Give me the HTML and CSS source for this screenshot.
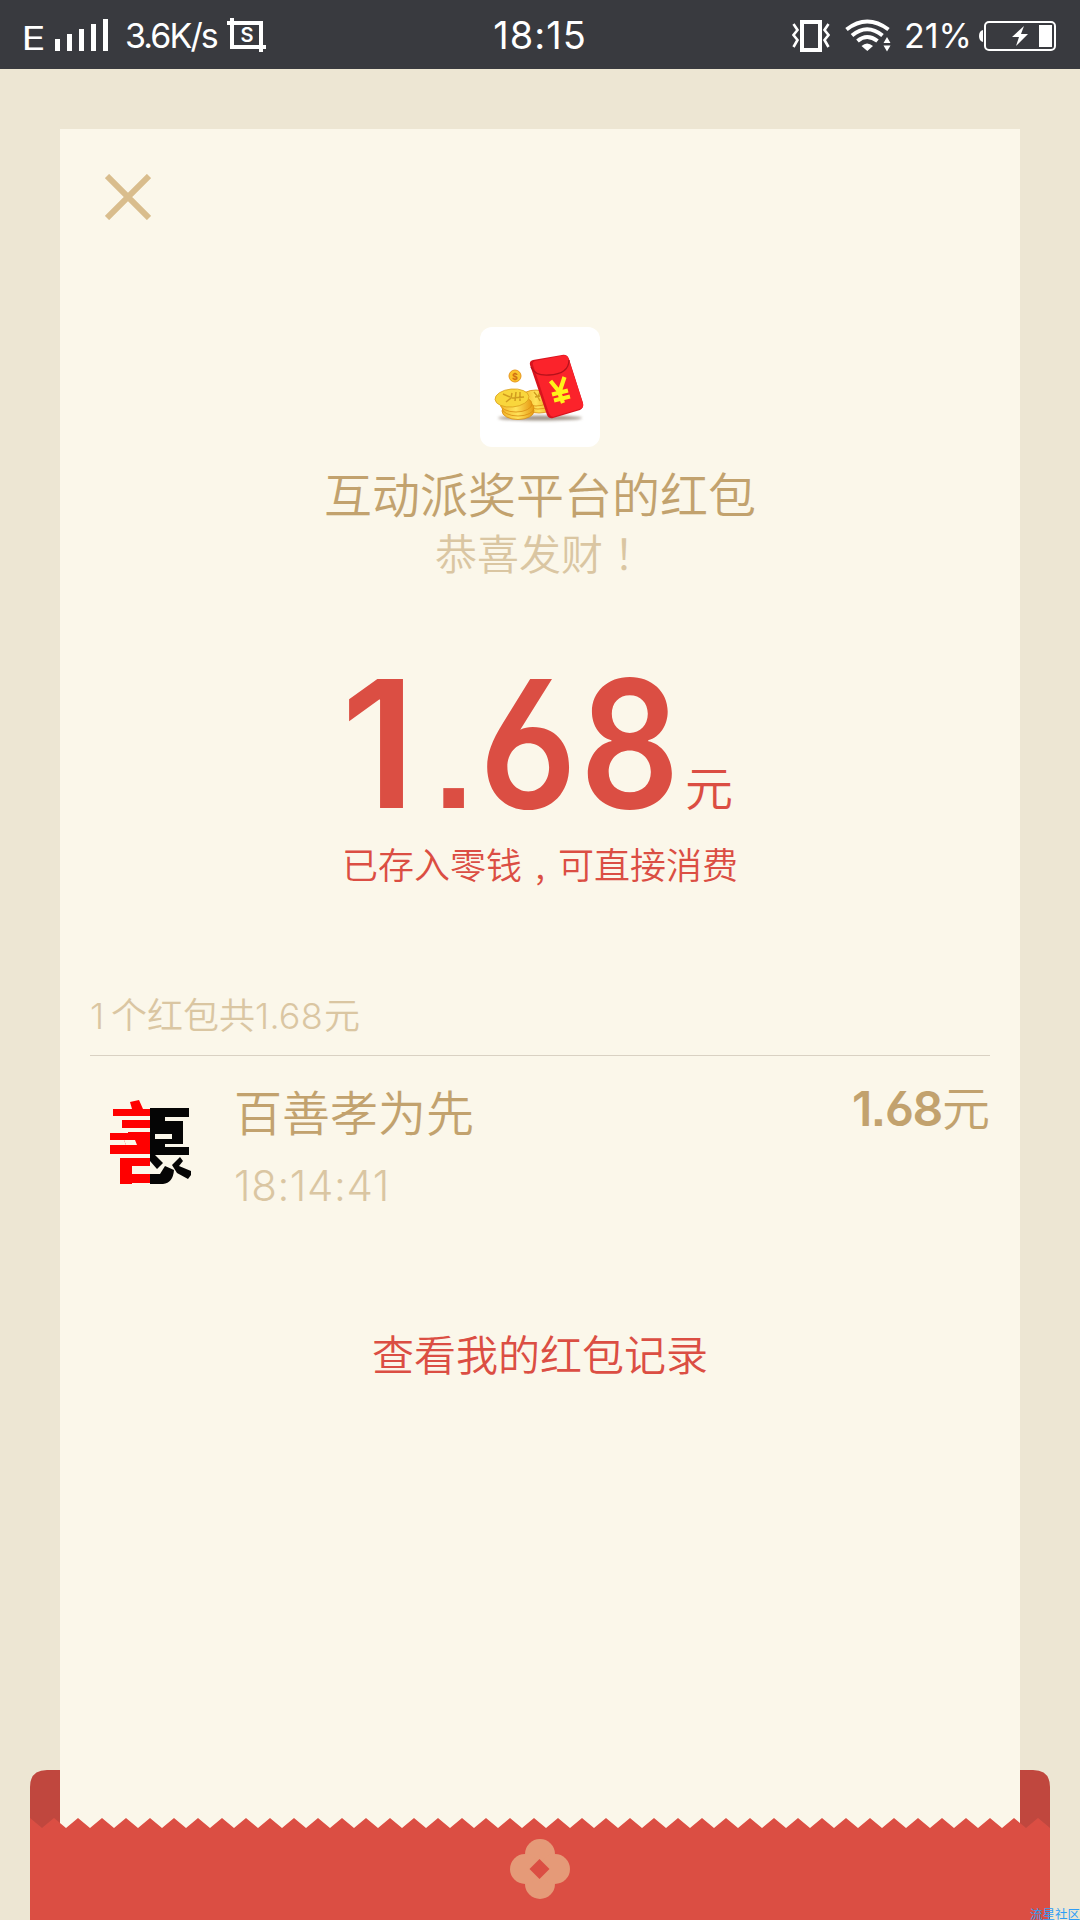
FILE: index.html
```html
<!DOCTYPE html>
<html lang="zh-CN">
<head>
<meta charset="utf-8">
<title>红包详情</title>
<link rel="stylesheet" href="styles.css">
</head>
<body>
<header class="status">
  <div class="status-left">
    <span class="network">E</span>
    <svg class="signal" width="54" height="33" viewBox="0 0 54 33" fill="#fff"><path d="M0 20h5v12H0zM12 15h5v17h-5zM24 10h5v22h-5zM36 5h5v27h-5zM48 0h5v32h-5z"/></svg>
    <span class="speed">3.6K/s</span>
    <span class="shot"><svg width="40" height="35" viewBox="0 0 40 35" fill="none" stroke="#fff" stroke-width="4"><path d="M0 5h34v29M5 0v29h34"/></svg><b class="shot-letter">S</b></span>
  </div>
  <span class="clock">18:15</span>
  <div class="status-right">
    <svg class="vibrate" width="38" height="32" viewBox="0 0 38 32" fill="none" stroke="#fff"><path d="M10 2h18v28H10z" stroke-width="4"/><path d="M1.500 4l4 6-4 5 4 5-4 7M36.500 4l-4 6 4 5-4 5 4 7" stroke-width="2.600"/></svg>
    <svg class="wifi" width="46" height="33" viewBox="0 0 46 33"><g fill="none" stroke="#fff" stroke-width="4"><path d="M1.500 10.500Q22 -5.500 43.500 10.500"/><path d="M7 16.500Q22 4 37.500 16.500"/><path d="M12.500 22Q22 14 32.500 22"/></g><path d="M16.500 27Q22 22 28 27L22.300 32zM38.500 24l3.500-6 3.500 6zM38.500 26.500h7L42 32.500z" fill="#fff"/></svg>
    <span class="percent">21%</span>
    <svg class="battery" width="77" height="30" viewBox="0 0 77 30"><rect x="6" y="1" width="70" height="28" rx="4" fill="none" stroke="#fff" stroke-width="2"/><path d="M4 9v12Q0 20 0 15T4 9zM60 4h13v22H60zM45 5L33 16h7l-3 9L49 13h-7z" fill="#fff"/></svg>
  </div>
</header>
<main class="stage">
  <section class="paper">
    <svg class="close" width="46" height="46" viewBox="0 0 46 46" stroke="#d9bd8d" stroke-width="6"><path d="M2 2l42 42M44 2L2 44"/></svg>
    <svg class="logo" width="120" height="120" viewBox="0 0 120 120">
      <defs>
        <linearGradient id="gold" x1="0" x2="1"><stop offset="0" stop-color="#f3b52b"/><stop offset=".5" stop-color="#ffe35a"/><stop offset="1" stop-color="#e79a13"/></linearGradient>
        <filter id="soft" x="-20%" y="-100%" width="140%" height="300%"><feGaussianBlur stdDeviation="1.800"/></filter>
      </defs>
      <rect width="120" height="120" rx="12" fill="#fff"/>
      <ellipse cx="60" cy="91" rx="42" ry="2.500" fill="#765" opacity=".7" filter="url(#soft)"/>
      <g fill="url(#gold)" stroke="#d98d12" stroke-width=".8">
        <ellipse cx="59" cy="79" rx="15" ry="7"/><ellipse cx="58" cy="75" rx="15" ry="7"/><ellipse cx="56" cy="71" rx="15" ry="8"/>
        <ellipse cx="38" cy="84" rx="16" ry="8.500"/><ellipse cx="38" cy="81" rx="16" ry="8"/><ellipse cx="36" cy="77" rx="16" ry="8"/>
      </g>
      <ellipse cx="32" cy="71" rx="17" ry="9" transform="rotate(-5 32 71)" fill="#f9d63c" stroke="#dba01c" stroke-width=".8"/>
      <path d="M23 67l7 3m-4 5l5-4 1-5m0 5l12-1m-8-5l-1 9m5-9v9" stroke="#d19c1f" stroke-width="1.500" fill="none"/>
      <path d="M54 65l4 5 2-5m-2 5l2 4m-5-4l5-1" stroke="#d19c1f" stroke-width="1.300" fill="none"/>
      <circle cx="35" cy="49" r="6" fill="#fbc52c" stroke="#e8961e" stroke-width="1"/>
      <text x="35" y="52.500" class="coin-sign">$</text>
      <path d="M50 38q-1-4 3-5l29-5q5-1 7 4l14 44q1 5-3 7l-27 8q-4 1-6-3z" fill="#d8141e"/>
      <path d="M53 38q-1-3 2-4l28-5.500q4-1 5.500 3l14.500 45q1 4-2 5l-27 8q-3 1-5-3z" fill="#fb232b"/>
      <path d="M51 40q4 9 18 8 20-1 20-15" fill="none" stroke="#b5121b" stroke-width="1.300"/>
      <path d="M70.500 54l9 11 5-15M79 65l4 11M72 67.500l16-4M74 73.500l16-4" fill="none" stroke="#fff21a" stroke-width="4.200"/>
    </svg>
    <h1 class="sender">互动派奖平台的红包</h1>
    <p class="wish">恭喜发财<span class="bang" lang="zh-TW">！</span></p>
    <div class="amount"><span class="d d1">1</span><span class="d dot">.</span><span class="d d6">6</span><span class="d d8">8</span><span class="yuan">元</span></div>
    <p class="saved">已存入零钱<span class="comma">,</span>可直接消费</p>
    <p class="summary"><span class="thin one">1</span>个红包共<span class="thin sum">1.68</span>元</p>
    <article class="row">
      <svg class="avatar" width="82" height="84" viewBox="0 0 82 84">
        <path fill="#f00" d="M20 2l9-2 4 9h7v74H22v1H10V57h30v-6H0V45h16l-2-5H0v-6h18v-5H12v-9h28v-4H3V9h19z"/>
        <path fill="#fbf7ea" d="M3 17h37v3H3zM12 28h28v4H12zM14 40h11l2 5H16zM0 54h40v4H0zM22 66h18v8H22z"/>
        <path fill="#f00" d="M0 33h40v6H0zM0 45h40v9H0z"/>
        <path fill="#050505" d="M40 8h39v9H55v4h18v23H62V34H45v5h17v5H55v3h24v8H45l8 8-6 6-7-8zM55 66l9 4q-1 13-11 14H40V74h10zM70 57l3 4-4 5 12 5v4l-3 4-11-6-5-8z"/>
      </svg>
      <div class="who"><div class="name">百善孝为先</div><time class="time">18:14:41</time></div>
      <div class="got"><b class="got-num">1.68</b>元</div>
    </article>
    <a class="history">查看我的红包记录</a>
  </section>
  <svg class="envelope" width="1020" height="150" viewBox="0 0 1020 150">
    <defs><pattern id="teeth" width="24" height="11" patternUnits="userSpaceOnUse" y="48"><path d="M0 0L12 10L24 0V11H0z" fill="#db4e43"/></pattern></defs>
    <path d="M0 60V17Q0 0 17 0H30V60zM990 0h13q17 0 17 17V60H990z" fill="#c0473e"/>
    <rect y="48" width="1020" height="11" fill="url(#teeth)"/>
    <rect y="58" width="1020" height="92" fill="#db4e43"/>
    <g fill="#e59a78"><circle cx="510" cy="84" r="15"/><circle cx="510" cy="114" r="15"/><circle cx="495" cy="99" r="15"/><circle cx="525" cy="99" r="15"/></g>
    <path d="M509.500 89l10 10-10 10-10-10z" fill="#db4e43"/>
  </svg>
  <span class="watermark">流星社区</span>
</main>
</body>
</html>
```
FILE: styles.css
```css
* { box-sizing: border-box; }
body { margin: 0; width: 1080px; height: 1920px; overflow: hidden; background: #ede6d3; font-family: "Noto Sans CJK SC", sans-serif; font-weight: 350; color: #c2a26e; }
h1, p { margin: 0; font-weight: 350; }
svg { display: block; flex: none; }

.status { display: grid; grid-template-columns: 1fr auto 1fr; height: 69px; padding: 0 24px; background: #393a3f; color: #fff; font: 400 34px/69px "Inter", sans-serif; }
.status-left, .status-right { display: flex; align-items: center; }
.status-right { justify-content: flex-end; }
.network { width: 31px; font-size: 32px; font-weight: 400; padding-top: 6px; line-height: 61px; transform: scaleX(1.25) translateX(-2px); transform-origin: left; }
.signal { margin-top: -1px; }
.speed { margin-left: 16px; width: 102px; white-space: nowrap; letter-spacing: -1.9px; }
.shot { position: relative; }
.shot-letter { position: absolute; inset: 0; text-align: center; font: 600 20px/35px "Inter", sans-serif; }
.clock { font-size: 38px; letter-spacing: 1px; line-height: 71px; }
.wifi { margin-left: 15px; }
.percent { margin-left: 13px; line-height: 71px; }
.battery { margin-left: 7px; }

.stage { position: relative; height: 1851px; padding-top: 60px; }
.paper { display: flex; flex-direction: column; align-items: center; width: 960px; height: 1700px; margin: 0 auto; padding: 45px 30px 0; background: #fbf7ea; }
.close { align-self: flex-start; margin-left: 15px; }
.logo { margin-top: 107px; }
.coin-sign { font: 700 9px "Inter", sans-serif; fill: #d06f12; text-anchor: middle; }
.sender { margin-top: 9px; font-size: 48px; line-height: 72px; }
.wish { font-size: 42px; line-height: 48px; color: #dac6a2; }
.bang { font-family: "Noto Sans CJK TC", sans-serif; }
.amount { display: flex; align-items: baseline; align-self: stretch; height: 140px; margin-top: 98px; padding-left: 253px; color: #db4e43; font: 600 177px/140px "Inter", sans-serif; font-feature-settings: "ss01", "cv03", "ss07"; }
.d { flex: none; transform-origin: left; }
.d1 { width: 88px; transform: translateX(-2px); }
.dot { width: 48px; font-size: 142px; }
.d6 { width: 101px; transform: scaleX(.92); }
.d8 { width: 106px; transform: scaleX(.88); }
.yuan { font: 350 48px/60px "Noto Sans CJK SC", sans-serif; transform: translate(-1px, -2px); }
.saved { margin-top: 24px; font-size: 36px; line-height: 50px; color: #db4e43; }
.comma { display: inline-block; width: 36px; text-align: center; }
.summary { display: flex; align-items: baseline; align-self: stretch; height: 68px; margin-top: 100px; font-size: 36px; line-height: 50px; color: #dac6a2; border-bottom: 1px solid #d9d1c3; }
.thin { font-family: "Inter", sans-serif; font-weight: 300; }
.one { width: 21px; }
.sum { width: 69px; letter-spacing: .2px; }
.row { display: flex; align-self: stretch; height: 164px; padding: 17px 0 0 20px; }
.avatar { margin-top: 27px; }
.who { margin-left: 42px; }
.name { font-size: 48px; line-height: 74px; }
.time { display: block; font: 300 42px/78px "Inter", sans-serif; letter-spacing: .6px; color: #dac6a2; }
.got { display: flex; align-items: baseline; margin-left: auto; padding-top: 2px; font-size: 48px; line-height: 60px; }
.got-num { font: 600 48px "Inter", sans-serif; letter-spacing: -1.3px; font-feature-settings: "ss01", "cv03", "ss07"; }
.history { margin-top: 103px; font-size: 42px; line-height: 60px; color: #db4e43; }

.envelope { position: absolute; left: 30px; bottom: 0; }
.watermark { position: absolute; right: 0; bottom: 0; font-size: 12.5px; font-weight: 400; line-height: 13px; color: #2f9df5; }
```
